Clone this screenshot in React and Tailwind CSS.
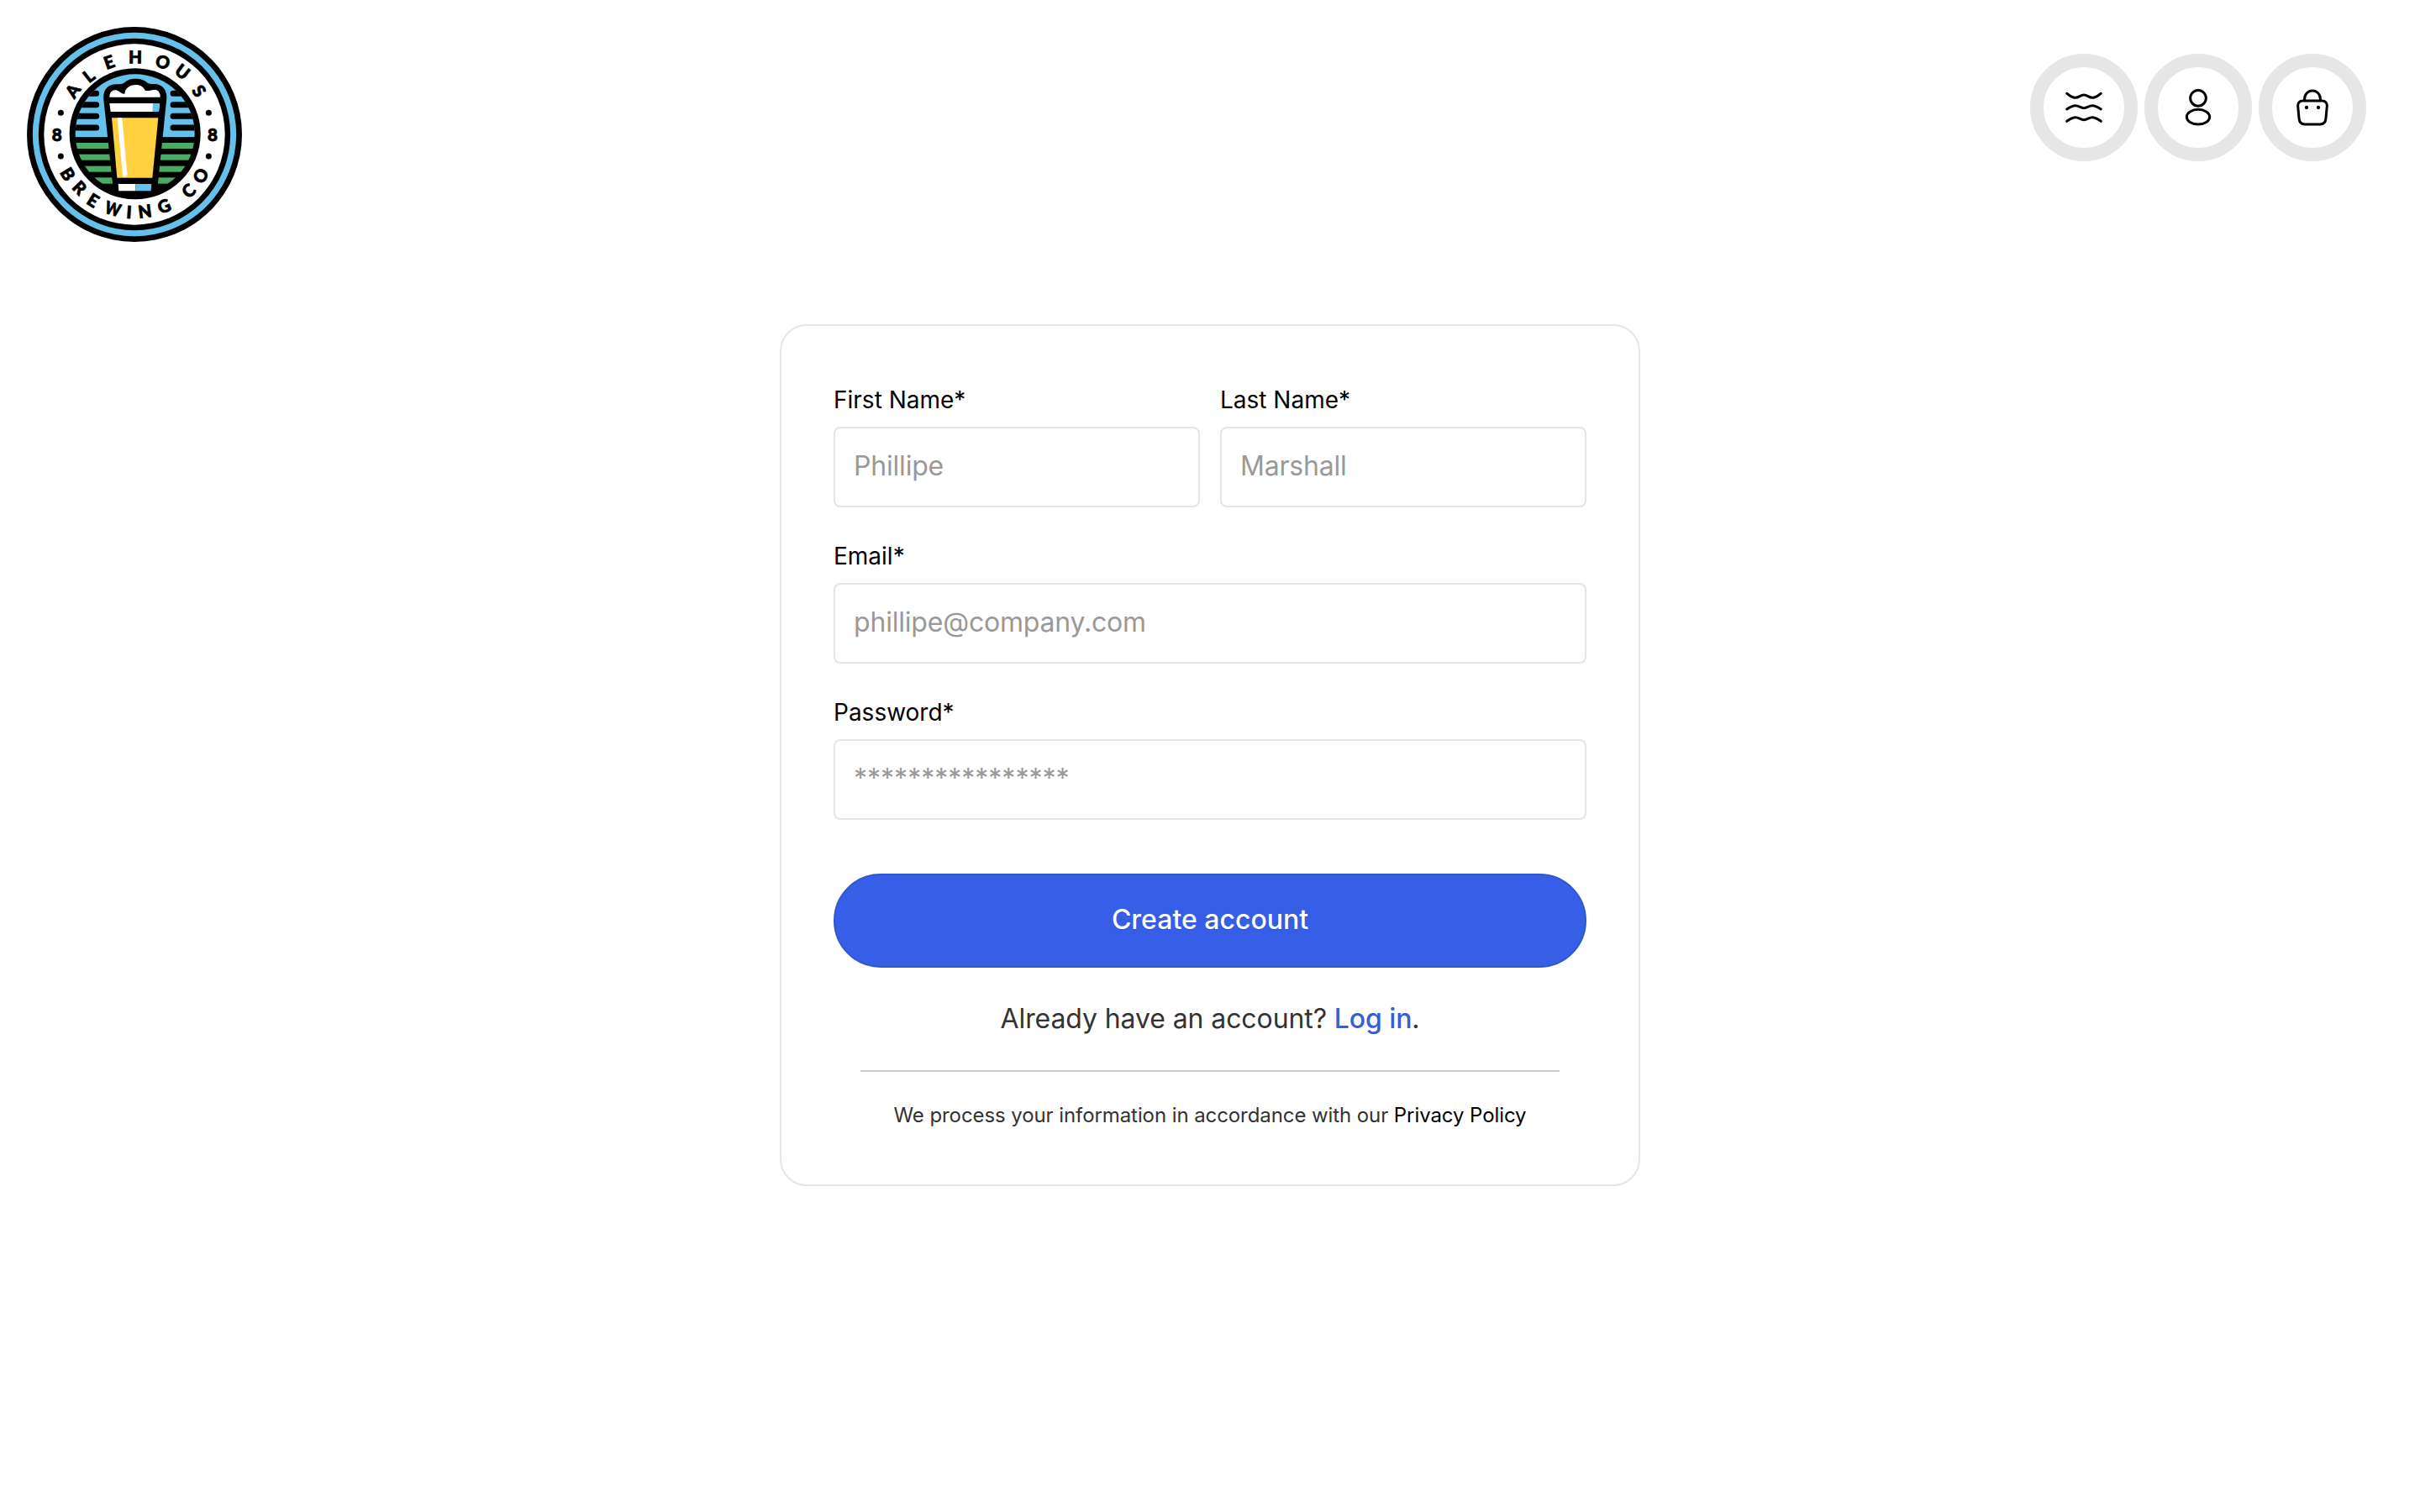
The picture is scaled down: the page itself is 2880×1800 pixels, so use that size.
const topLetters = [
  ['A', 200, 264], ['L', 257, 211], ['E', 330, 162], ['H', 423, 144], ['O', 521, 162], ['U', 591, 197], ['S', 650, 265],
];
const bottomLetters = [
  ['B', 182, 562], ['R', 224, 611], ['E', 272, 656], ['W', 343, 686], ['I', 401, 698], ['N', 457, 695], ['G', 526, 677], ['C', 614, 622], ['O', 657, 568],
];

function Letter({ char, x, y, angle }) {
  const stretch = char === 'W' ? 0.84 : 1;
  return (
    <text transform={`translate(${x} ${y}) rotate(${angle}) scale(${stretch} 1)`} y="22" textAnchor="middle">
      {char}
    </text>
  );
}

function Logo() {
  const deg = 180 / Math.PI;
  return (
    <svg viewBox="36 36 768 768" className="size-64" role="img" aria-label="Alehous Brewing Co">
      <defs>
        <clipPath id="scene"><circle cx="422" cy="418" r="213" /></clipPath>
      </defs>
      <circle cx="420" cy="420" r="384" fill="#000" />
      <circle cx="420" cy="420" r="353" fill="none" stroke="#66c1ea" strokeWidth="21" />
      <circle cx="420" cy="420" r="323" fill="#fff" />
      <circle cx="422" cy="418" r="234" fill="#000" />
      <g clipPath="url(#scene)">
        <rect x="200" y="200" width="450" height="230" fill="#66c1ea" />
        <rect x="200" y="430" width="450" height="230" fill="#000" />
        <g fill="#4aaa66">
          <rect x="200" y="450" width="450" height="21" />
          <rect x="200" y="491" width="450" height="21" />
          <rect x="200" y="533" width="450" height="21" />
          <rect x="200" y="574" width="450" height="22" />
        </g>
        <g stroke="#000" strokeWidth="21" strokeLinecap="round">
          <path d="M190 274H284M190 314H284M190 355H284M190 396H284" />
          <path d="M558 274H660M558 314H660M558 355H660M558 396H660" />
        </g>
      </g>
      <path d="M310 296 C306 262 324 241 356 241 C370 241 378 240 386 234 C400 217 448 217 464 234 C470 240 478 240 490 240 C522 240 537 264 535 292 L500 632 H346 Z" fill="#000" />
      <path d="M331 287 C331 262 350 256 366 267 C372 271 378 277 385 275 C386 252 408 243 425 243 C442 243 452 250 458 263 C470 267 480 260 494 260 C506 262 513 272 512 287 Z" fill="#fff" />
      <path d="M331 309 H510 L507 339 H335 Z" fill="#fff" />
      <path d="M486 309 H510 L507 339 H484 Z" fill="#66c1ea" />
      <path d="M339 361 H505 L484 575 H358 Z" fill="#ffd141" />
      <path d="M359 361 H376 L394.5 563 H377.5 Z" fill="#fff" />
      <circle cx="386" cy="563" r="8.5" fill="#fff" />
      <path d="M362 597 H424 V622 H364 Z" fill="#fff" />
      <path d="M424 597 H481 L479 622 H424 Z" fill="#66c1ea" />
      <g className="font-['Lato',sans-serif] font-black text-[62px]" fill="#000" stroke="#000" strokeWidth="2.5">
        {topLetters.map(([c, x, y]) => (
          <Letter key={c} char={c} x={x} y={y} angle={Math.atan2(x - 420, 420 - y) * deg} />
        ))}
        {bottomLetters.map(([c, x, y]) => (
          <Letter key={c} char={c} x={x} y={y} angle={-Math.atan2(x - 420, y - 420) * deg} />
        ))}
        <Letter char="8" x={143} y={422} angle={0} />
        <Letter char="8" x={699} y={422} angle={0} />
      </g>
      <circle cx="157" cy="343" r="10.5" />
      <circle cx="685" cy="343" r="10.5" />
      <circle cx="157" cy="498" r="10.5" />
      <circle cx="685" cy="498" r="10.5" />
    </svg>
  );
}

function IconButton({ label, children }) {
  return (
    <button aria-label={label} className="flex size-32 items-center justify-center rounded-full border-16 border-[#e6e6e6] bg-white">
      <svg viewBox="0 0 144 144" className="size-12" fill="none" stroke="#000" strokeWidth="9" strokeLinecap="round" strokeLinejoin="round">
        {children}
      </svg>
    </button>
  );
}

function Field({ label, type = 'text', placeholder }) {
  return (
    <label className="flex min-w-0 flex-1 flex-col">
      <span className="text-[28px] leading-[34px] text-black">{label}</span>
      <input
        type={type}
        placeholder={placeholder}
        className={`mt-[15px] h-24 w-full rounded-lg border-2 border-[#e5e5e5] bg-white px-[22px] pb-1 text-[32px] leading-10 placeholder:text-[#999999] placeholder:opacity-100 ${
          type === 'password' ? 'tracking-normal' : 'tracking-[-0.006em]'
        }`}
      />
    </label>
  );
}

export default function App() {
  return (
    <div className="flex h-[1800px] w-[2880px] flex-col bg-white font-['Inter',sans-serif]">
      <header className="flex h-[386px] shrink-0 items-start justify-between pt-8 pr-16 pl-8">
        <Logo />
        <nav className="flex gap-2 pt-8">
          <IconButton label="Menu">
            <path d="M11 22 C24 31 30 37 42 37 C54 37 60 27 72 27 C84 27 90 37 102 37 C114 37 120 31 133 22" />
            <path d="M11 78 C24 69 30 65 42 65 C54 65 60 74 72 74 C84 74 90 65 102 65 C114 65 120 69 133 78" />
            <path d="M11 121 C24 112 30 107 42 107 C54 107 60 116 72 116 C84 116 90 107 102 107 C114 107 120 112 133 121" />
          </IconButton>
          <IconButton label="Account">
            <circle cx="72" cy="38.5" r="28" />
            <ellipse cx="72" cy="105.5" rx="41" ry="26.5" />
          </IconButton>
          <IconButton label="Bag">
            <path d="M44 46 V40 a28 28 0 0 1 56 0 V46" />
            <path d="M38 48 H106 C118 48 125 56 124 67 L120 110 C119 125 112 132 99 132 H45 C32 132 25 125 24 110 L20 67 C19 56 26 48 38 48 Z" />
            <path d="M51 72h0.1M93 72h0.1" strokeWidth="13" />
          </IconButton>
        </nav>
      </header>
      <main className="mx-auto flex h-[1026px] w-[1024px] flex-col rounded-4xl border-2 border-[#e6e6e6] px-[62px] pt-[71px]">
        <form className="flex flex-col">
          <div className="flex flex-col gap-[41px]">
            <div className="flex gap-6">
              <Field label="First Name*" placeholder="Phillipe" />
              <Field label="Last Name*" placeholder="Marshall" />
            </div>
            <Field label="Email*" placeholder="phillipe@company.com" />
            <Field label="Password*" type="password" placeholder="****************" />
          </div>
          <button type="button" className="mt-16 h-28 rounded-full border-2 border-[#3257cc] bg-[#375ee6] pb-0.5 text-[32px] leading-10 font-medium text-white [text-shadow:0_1px_2px_rgba(0,0,0,0.12)]">
            Create account
          </button>
        </form>
        <p className="mt-10 text-center text-[32px] leading-[42px] tracking-[-0.003em] text-[#333333]">
          Already have an account? <a className="font-medium text-[#375ed8]">Log in</a>.
        </p>
        <hr className="mx-8 mt-10 border-t-2 border-[#cccccc]" />
        <p className="mt-9 text-center text-[24px] leading-8 tracking-[-0.0035em] text-[#333333]">
          We process your information in accordance with our <a className="text-black">Privacy Policy</a>
        </p>
      </main>
    </div>
  );
}
